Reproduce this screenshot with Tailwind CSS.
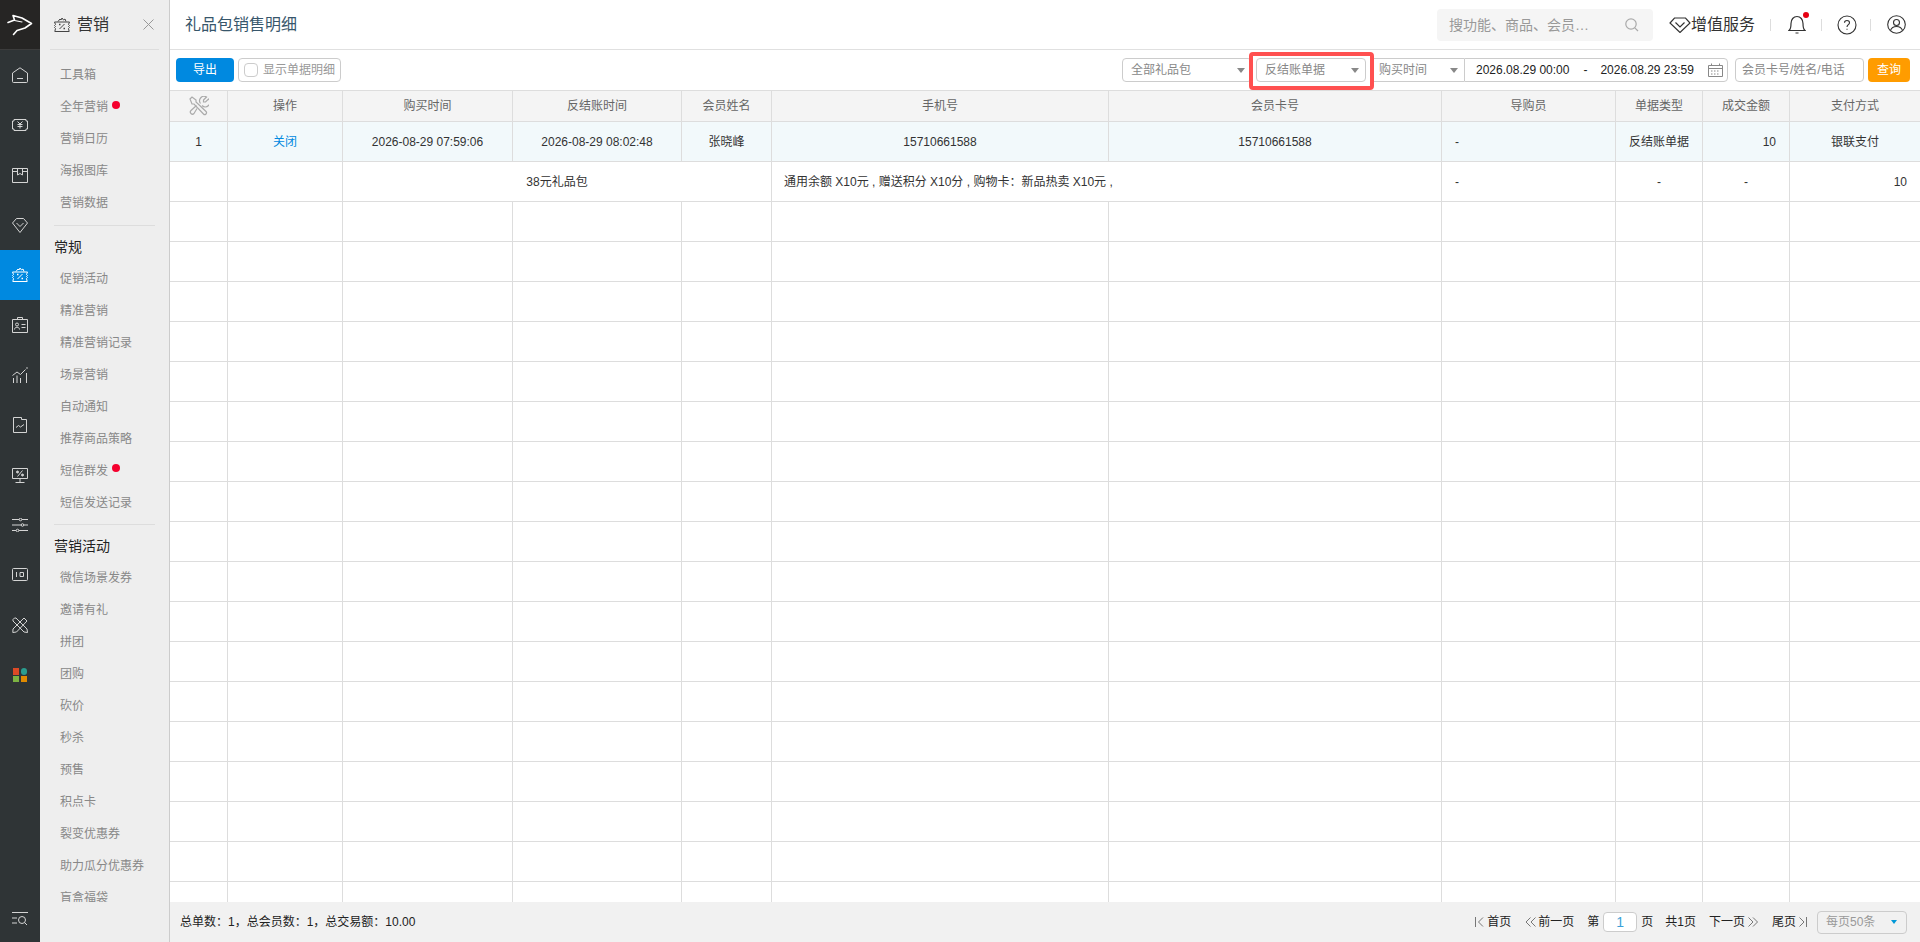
<!DOCTYPE html>
<html lang="zh-CN">
<head>
    <meta charset="UTF-8">
    <title>礼品包销售明细</title>
    <script src="https://cdn.jsdelivr.net/npm/@tailwindcss/browser@4"></script>
</head>
<body class="h-screen overflow-hidden flex bg-white text-xs text-[#333] font-['Liberation_Sans','Noto_Sans_CJK_SC',sans-serif]">

    <!-- rail -->
    <nav class="w-10 shrink-0 bg-[#2f3436] flex flex-col items-center text-[#d4d4d4]">
        <div class="w-full h-[50px] bg-[#262524] border-b border-[#3c3c3c]">
            <svg width="40" height="49" viewBox="0 0 40 49" fill="none" stroke="#fff" stroke-width="1.600" stroke-linejoin="round" stroke-linecap="round"><path d="M8 22.500 14.500 20 13 15.500l9 2.500 9.500 5.500L25 28l-8 2.500L13.500 34.500" /><path d="M14.500 20.500 22 22" stroke-width="1.200" /></svg>
        </div>
        <div class="w-full h-[50px] flex items-center justify-center"><svg width="16" height="16" viewBox="0 0 16 16" fill="none" stroke="currentColor"><path d="M.5 6 8 .8 15.500 6v8.500a1 1 0 0 1-1 1h-13a1 1 0 0 1-1-1z" /><path d="M5 11.500h6" /></svg></div>
        <div class="w-full h-[50px] flex items-center justify-center"><svg width="16" height="12" viewBox="0 0 16 12" fill="none" stroke="currentColor"><path d="M2 .5h12v1.500h1.500v8H14v1.500H2V10H.5V2H2z" /><path d="M5.500 2.500 8 5l2.500-2.500M8 5v4.500M5.500 5.500h5M5.500 7.500h5" /></svg></div>
        <div class="w-full h-[50px] flex items-center justify-center"><svg width="16" height="15" viewBox="0 0 16 15" fill="none" stroke="currentColor"><path d="M.5.5h15v14H.5zM.5 3.500h5.500M10 3.500h5.500M5.500.5v6.500L8 5.500l2.500 1.500V.5" /></svg></div>
        <div class="w-full h-[50px] flex items-center justify-center"><svg width="16" height="15" viewBox="0 0 16 15" fill="none" stroke="currentColor"><path d="M4.500.5h7L15.500 5 8 14.500.5 5z" /><path d="M4.500 5 8 8.500 11.500 5" /></svg></div>
        <div class="w-full h-[50px] bg-[#0089e0] text-white flex items-center justify-center"><svg width="16" height="16" viewBox="0 0 16 16" fill="none" stroke="currentColor"><path d="M.5 5h15l-1 2.500 1 1-1 1 1 1-1 1 .7 3H.8l.7-3-1-1 1-1-1-1 1-1z" /><path d="M4 4.500 6 2l1 1 1-2 1.500 2L11 2l1 2.500M5.500 12l5-5" /><path d="M5 7.500h1.500M9.500 11.500H11" stroke-width="1.500" /></svg></div>
        <div class="w-full h-[50px] flex items-center justify-center"><svg width="16" height="16" viewBox="0 0 16 16" fill="none" stroke="currentColor"><path d="M.5 2.500h15v13H.5zM5.500 2.500v-2h5v2" /><circle cx="5" cy="7.500" r="1.500" /><path d="M2.500 12.500c0-3 5-3 5 0M9.500 7.500h4M9.500 10.500h4" /></svg></div>
        <div class="w-full h-[50px] flex items-center justify-center"><svg width="16" height="16" viewBox="0 0 16 16" fill="none" stroke="currentColor"><path d="M.5 8.500 5 5l3.500 2.500 5-5M1.500 11v5M5 8.500V16M8.500 11v5M14.500 6v10" /><circle cx="15" cy="1" r=".8" fill="currentColor" stroke="none" /></svg></div>
        <div class="w-full h-[50px] flex items-center justify-center"><svg width="14" height="16" viewBox="0 0 14 16" fill="none" stroke="currentColor"><path d="M.5.5h8v2h5v13H.5z" /><path d="M3 10.500 5.500 8.500l2 1.500 3.500-2.500" /></svg></div>
        <div class="w-full h-[50px] flex items-center justify-center"><svg width="16" height="15" viewBox="0 0 16 15" fill="none" stroke="currentColor"><path d="M.5.500h15v10H.5zM8 10.500v3.500M3.500 14.500h9M5.500 8.500l5-6" /><circle cx="5.500" cy="4" r="1" fill="currentColor" /><circle cx="10.500" cy="7" r="1" fill="currentColor" /></svg></div>
        <div class="w-full h-[50px] flex items-center justify-center"><svg width="16" height="14" viewBox="0 0 16 14" fill="none" stroke="currentColor"><path d="M0 1.500h16M0 7h16M0 12.500h16" /><circle cx="8.500" cy="1.500" r="1.300" fill="#2f3436" /><circle cx="10.500" cy="7" r="1.300" fill="#2f3436" /><circle cx="5.500" cy="12.500" r="1.300" fill="#2f3436" /></svg></div>
        <div class="w-full h-[50px] flex items-center justify-center"><svg width="16" height="14" viewBox="0 0 16 14" fill="none" stroke="currentColor"><path d="M1.500.5h13a1 1 0 0 1 1 1v10a1 1 0 0 1-1 1h-13a1 1 0 0 1-1-1v-10a1 1 0 0 1 1-1zM4.500 4v5M8 4.500h3.500v4H8z" /></svg></div>
        <div class="w-full h-[50px] flex items-center justify-center"><svg width="16" height="16" viewBox="0 0 16 16" fill="none" stroke="currentColor"><path d="M1 2.500 2.500 1 4 1l11 11 .5 3.500L12 15 1 4zM12 1l3 3L4.500 15 .8 15.500 1 12z" /></svg></div>
        <div class="w-full h-[50px] flex items-center justify-center"><div class="grid grid-cols-2 gap-px w-[15px]"><i class="w-[6.500px] h-[6.500px] bg-[#dc4a26]"></i><i class="w-[6.500px] h-[6.500px] rounded-full bg-[#2a9d8f]"></i><i class="w-[6.500px] h-[6.500px] bg-[#7cb342]"></i><i class="w-[6.500px] h-[6.500px] bg-[#e08a00]"></i></div></div>
        <div class="mt-auto mb-4 flex"><svg width="16" height="14" viewBox="0 0 16 14" fill="none" stroke="currentColor"><path d="M0 .5h16M0 6h5M0 11h5" /><circle cx="10" cy="8" r="3.500" /><path d="M12.500 10.500 15 13" /></svg></div>
    </nav>

    <!-- side menu -->
    <aside class="w-[130px] shrink-0 bg-[#eee] border-r border-[#ccc] h-full">
        <div class="h-[50px] mx-[10px] border-b border-[#ddd] flex items-center pl-1">
            <svg width="16" height="16" viewBox="0 0 16 16" fill="none" stroke="#444"><path d="M.5 5h15l-1 2.500 1 1-1 1 1 1-1 1 .7 3H.8l.7-3-1-1 1-1-1-1 1-1z" /><path d="M4 4.500 6 2l1 1 1-2 1.500 2L11 2l1 2.500M5.500 12l5-5" /><path d="M5 7.500h1.500M9.500 11.500H11" stroke-width="1.500" /></svg>
            <span class="ml-[7px] text-base text-[#333]">营销</span>
            <svg class="ml-auto mr-[5px]" width="11" height="11" viewBox="0 0 11 11" stroke="#999"><path d="M.5.500l10 10M10.500.500l-10 10" /></svg>
        </div>
        <div class="h-[852px] overflow-hidden pt-[9px] text-[#888]">
            <a class="h-8 pl-5 flex items-center">工具箱</a>
            <a class="h-8 pl-5 flex items-center relative">全年营销<i class="absolute left-[72px] top-[10px] w-2 h-2 rounded-full bg-[#f5002e]"></i></a>
            <a class="h-8 pl-5 flex items-center">营销日历</a>
            <a class="h-8 pl-5 flex items-center">海报图库</a>
            <a class="h-8 pl-5 flex items-center">营销数据</a>
            <div class="mx-[14px] mt-[6px] border-t border-[#ddd]"></div>
            <h3 class="h-8 mt-[5px] pl-[14px] flex items-center text-[14px] text-[#222]">常规</h3>
            <a class="h-8 pl-5 flex items-center">促销活动</a>
            <a class="h-8 pl-5 flex items-center">精准营销</a>
            <a class="h-8 pl-5 flex items-center">精准营销记录</a>
            <a class="h-8 pl-5 flex items-center">场景营销</a>
            <a class="h-8 pl-5 flex items-center">自动通知</a>
            <a class="h-8 pl-5 flex items-center">推荐商品策略</a>
            <a class="h-8 pl-5 flex items-center relative">短信群发<i class="absolute left-[72px] top-[9px] w-2 h-2 rounded-full bg-[#f5002e]"></i></a>
            <a class="h-8 pl-5 flex items-center">短信发送记录</a>
            <div class="mx-[14px] mt-[5px] border-t border-[#ddd]"></div>
            <h3 class="h-8 mt-[5px] pl-[14px] flex items-center text-[14px] text-[#222]">营销活动</h3>
            <a class="h-8 pl-5 flex items-center">微信场景发券</a>
            <a class="h-8 pl-5 flex items-center">邀请有礼</a>
            <a class="h-8 pl-5 flex items-center">拼团</a>
            <a class="h-8 pl-5 flex items-center">团购</a>
            <a class="h-8 pl-5 flex items-center">砍价</a>
            <a class="h-8 pl-5 flex items-center">秒杀</a>
            <a class="h-8 pl-5 flex items-center">预售</a>
            <a class="h-8 pl-5 flex items-center">积点卡</a>
            <a class="h-8 pl-5 flex items-center">裂变优惠券</a>
            <a class="h-8 pl-5 flex items-center">助力瓜分优惠券</a>
            <a class="h-8 pl-5 flex items-center">盲盒福袋</a>
        </div>
    </aside>

    <main class="flex-1 min-w-0 flex flex-col relative">
        <!-- top bar -->
        <header class="h-[50px] shrink-0 border-b border-[#e0e0e0] flex items-center pl-[15px]">
            <h1 class="text-base text-[#37566b]">礼品包销售明细</h1>
            <div class="ml-auto w-[216px] h-8 rounded bg-[#f5f5f5] flex items-center pl-3 pr-[14px] text-sm text-[#999]">
                搜功能、商品、会员…
                <svg class="ml-auto" width="14" height="14" viewBox="0 0 14 14" fill="none" stroke="#aaa" stroke-width="1.200"><circle cx="6" cy="6" r="5.200" /><path d="M9.800 9.800 13 13" /></svg>
            </div>
            <svg class="ml-[16px]" width="22" height="16" viewBox="0 0 22 16" fill="none" stroke="#333" stroke-width="1.200"><path d="M5.500 1h11L21 6l-10 9.500L1 6z" /><path d="M6.500 5.500 11 10l4.500-4.500" /></svg>
            <span class="text-base text-[#333]">增值服务</span>
            <i class="ml-[15px] h-3 border-l border-[#ddd]"></i>
            <div class="ml-[17px] relative flex">
                <svg width="18" height="20" viewBox="0 0 18 20" fill="none" stroke="#333" stroke-width="1.200"><path d="M1 15.500c2-1.500 2-3 2-7C3 4.500 5.500 1.500 9 1.500s6 3 6 7c0 4 0 5.500 2 7zM7.500 18h3" /></svg>
                <i class="absolute -right-[3px] -top-[3px] w-[6px] h-[6px] rounded-full bg-[#e60012]"></i>
            </div>
            <i class="ml-[15px] h-3 border-l border-[#ddd]"></i>
            <svg class="ml-[15px]" width="20" height="20" viewBox="0 0 20 20" fill="none" stroke="#333" stroke-width="1.100"><circle cx="10" cy="10" r="9" /><path d="M7.500 7.800C7.500 6.300 8.700 5.500 10 5.500s2.500.9 2.500 2.200c0 2-2.500 2-2.500 4.300M10 13.800v1" /></svg>
            <i class="ml-[13px] h-3 border-l border-[#ddd]"></i>
            <svg class="ml-[16px] mr-[14px]" width="19" height="19" viewBox="0 0 19 19" fill="none" stroke="#333" stroke-width="1.100"><circle cx="9.500" cy="9.500" r="8.800" /><circle cx="9.500" cy="7.500" r="3" /><path d="M3.500 15.500c1-3 3.500-4 6-4s5 1 6 4" /></svg>
        </header>

        <!-- filters -->
        <div class="h-10 shrink-0 flex items-center pl-[6px] pr-[10px]">
            <button class="w-[58px] h-6 rounded-sm bg-[#0089e0] text-white">导出</button>
            <label class="ml-1 w-[103px] h-6 border border-[#ccc] rounded-sm flex items-center pl-[5px] text-[#999]">
                <i class="w-[14px] h-[14px] border border-[#ccc] rounded-sm mr-[5px]"></i>显示单据明细
            </label>
            <div class="ml-auto w-[130px] h-6 border border-[#ccc] rounded-sm flex items-center justify-between pl-2 pr-[6px] text-[#888]">全部礼品包<i class="border-x-4 border-t-[5px] border-x-transparent border-t-[#888]"></i></div>
            <div class="ml-1 w-[110px] h-6 border border-[#ccc] rounded-sm flex items-center justify-between pl-2 pr-[6px] text-[#888]">反结账单据<i class="border-x-4 border-t-[5px] border-x-transparent border-t-[#888]"></i></div>
            <div class="ml-1 w-[94px] h-6 border border-[#ccc] border-r-0 rounded-l-sm flex items-center justify-between pl-2 pr-[6px] text-[#888]">购买时间<i class="border-x-4 border-t-[5px] border-x-transparent border-t-[#888]"></i></div>
            <div class="w-[264px] h-6 border border-[#ccc] rounded-r-sm flex items-center pl-[11px] text-[#222]">
                <span>2026.08.29 00:00</span>
                <span class="ml-[14px]">-</span>
                <span class="ml-[13px]">2026.08.29 23:59</span>
                <svg class="ml-[14px]" width="15" height="14" viewBox="0 0 15 14" fill="none" stroke="#888"><path d="M.5 2.500h14v11H.5zM.5 5.500h14M3.500.5v2M11.500.5v2" /><path d="M3 8h9M3 11h9" stroke-dasharray="1.500 1.500" /></svg>
            </div>
            <div class="ml-[7px] w-[129px] h-6 border border-[#ccc] rounded-sm flex items-center pl-[6px] text-[#888]">会员卡号/姓名/电话</div>
            <button class="ml-1 w-[42px] h-6 rounded-sm bg-[#ff9c00] text-white">查询</button>
        </div>

        <!-- table -->
        <div class="flex-1 min-h-0 overflow-hidden border-t border-[#ddd]">
            <table class="table-fixed w-[1750px] border-separate border-spacing-0 text-center">
                <colgroup>
                    <col class="w-[58px]"><col class="w-[115px]"><col class="w-[170px]"><col class="w-[169px]"><col class="w-[90px]"><col class="w-[337px]"><col class="w-[333px]"><col class="w-[174px]"><col class="w-[87px]"><col class="w-[87px]"><col class="w-[130px]">
                </colgroup>
                <thead>
                    <tr class="h-[31px] bg-[#f4f4f4] text-[#666]">
                        <th class="font-normal border-r border-b border-[#ddd]"><svg class="mx-auto" width="20" height="20" viewBox="0 0 20 20" fill="none" stroke="#aaa" stroke-width="1.200"><path d="M1 3 3 1l4 3v2l10 9.500c.8.8.8 1.700 0 2.500s-1.700.8-2.500 0L5 8H3z" /><path d="M11.500 7.500A4.500 4.500 0 0 1 17.500 1L14.500 4v2h2l3-3A4.500 4.500 0 0 1 13 9.500M8 12.500 5 17.500a2 2 0 0 1-3-3l5.500-5" /></svg></th>
                        <th class="font-normal border-r border-b border-[#ddd]">操作</th>
                        <th class="font-normal border-r border-b border-[#ddd]">购买时间</th>
                        <th class="font-normal border-r border-b border-[#ddd]">反结账时间</th>
                        <th class="font-normal border-r border-b border-[#ddd]">会员姓名</th>
                        <th class="font-normal border-r border-b border-[#ddd]">手机号</th>
                        <th class="font-normal border-r border-b border-[#ddd]">会员卡号</th>
                        <th class="font-normal border-r border-b border-[#ddd]">导购员</th>
                        <th class="font-normal border-r border-b border-[#ddd]">单据类型</th>
                        <th class="font-normal border-r border-b border-[#ddd]">成交金额</th>
                        <th class="font-normal border-b border-[#ddd]">支付方式</th>
                    </tr>
                </thead>
                <tbody id="rows">
                    <tr class="h-10 bg-[#f2f9fb]">
                        <td class="border-r border-b border-[#ddd]">1</td>
                        <td class="border-r border-b border-[#ddd] text-[#0089e0]">关闭</td>
                        <td class="border-r border-b border-[#ddd]">2026-08-29 07:59:06</td>
                        <td class="border-r border-b border-[#ddd]">2026-08-29 08:02:48</td>
                        <td class="border-r border-b border-[#ddd]">张晓峰</td>
                        <td class="border-r border-b border-[#ddd]">15710661588</td>
                        <td class="border-r border-b border-[#ddd]">15710661588</td>
                        <td class="border-r border-b border-[#ddd] text-left pl-[13px]">-</td>
                        <td class="border-r border-b border-[#ddd]">反结账单据</td>
                        <td class="border-r border-b border-[#ddd] text-right pr-[13px]">10</td>
                        <td class="border-b border-[#ddd]">银联支付</td>
                    </tr>
                    <tr class="h-10">
                        <td class="border-r border-b border-[#ddd]"></td>
                        <td class="border-r border-b border-[#ddd]"></td>
                        <td colspan="3" class="border-r border-b border-[#ddd]">38元礼品包</td>
                        <td colspan="2" class="border-r border-b border-[#ddd] text-left pl-3">通用余额 X10元 , 赠送积分 X10分 , 购物卡：新品热卖 X10元 ,</td>
                        <td class="border-r border-b border-[#ddd] text-left pl-[13px]">-</td>
                        <td class="border-r border-b border-[#ddd]">-</td>
                        <td class="border-r border-b border-[#ddd]">-</td>
                        <td class="border-b border-[#ddd] text-right pr-[13px]">10</td>
                    </tr>
                </tbody>
            </table>
        </div>

        <!-- footer -->
        <footer class="h-10 shrink-0 bg-[#f1f1f1] flex items-center pl-[10px] pr-[13px] text-[#222]">
            <span>总单数：1，总会员数：1，总交易额：10.00</span>
            <svg class="ml-auto" width="9" height="10" viewBox="0 0 9 10" fill="none" stroke="#777"><path d="M.5 0v10M8 .5 3.500 5 8 9.500" /></svg>
            <span class="ml-[3px]">首页</span>
            <svg class="ml-[14px]" width="12" height="10" viewBox="0 0 12 10" fill="none" stroke="#777"><path d="M5.500.5 1 5l4.500 4.500M10.500.5 6 5l4.500 4.500" /></svg>
            <span class="ml-[1px]">前一页</span>
            <span class="ml-[13px]">第</span>
            <span class="ml-1 w-[34px] h-5 bg-white border border-[#ccc] rounded-sm flex items-center justify-center text-sm text-[#3b9fd8]">1</span>
            <span class="ml-1">页</span>
            <span class="ml-3">共1页</span>
            <span class="ml-[13px]">下一页</span>
            <svg class="ml-[3px]" width="10" height="10" viewBox="0 0 10 10" fill="none" stroke="#777"><path d="M.5.500 5 5 .5 9.500M5 .5 9.500 5 5 9.500" /></svg>
            <span class="ml-[14px]">尾页</span>
            <svg class="ml-[3px]" width="8" height="10" viewBox="0 0 8 10" fill="none" stroke="#777"><path d="M.5.500 5 5 .5 9.500M7.500 0v10" /></svg>
            <div class="ml-[10px] w-[90px] h-[23px] border border-[#ccc] rounded-sm flex items-center justify-between pl-2 pr-[9px] text-[#999]">每页50条<i class="border-x-[3.500px] border-t-[4px] border-x-transparent border-t-[#0098d8]"></i></div>
        </footer>

        <!-- highlight drawn on the screenshot -->
        <div class="absolute left-[1079px] top-[52px] w-[125px] h-[38px] border-4 border-[#ff5050] rounded-sm"></div>
    </main>

    <script>
        // empty rows to fill the grid
        let tbody = document.getElementById("rows");
        for (let i = 0; i < 18; i++) {
            let row = document.createElement("tr");
            row.className = "h-10";
            for (let c = 0; c < 11; c++) {
                let cell = document.createElement("td");
                cell.className = c < 10 ? "border-r border-b border-[#ddd]" : "border-b border-[#ddd]";
                row.appendChild(cell);
            }
            tbody.appendChild(row);
        }
    </script>
</body>
</html>
